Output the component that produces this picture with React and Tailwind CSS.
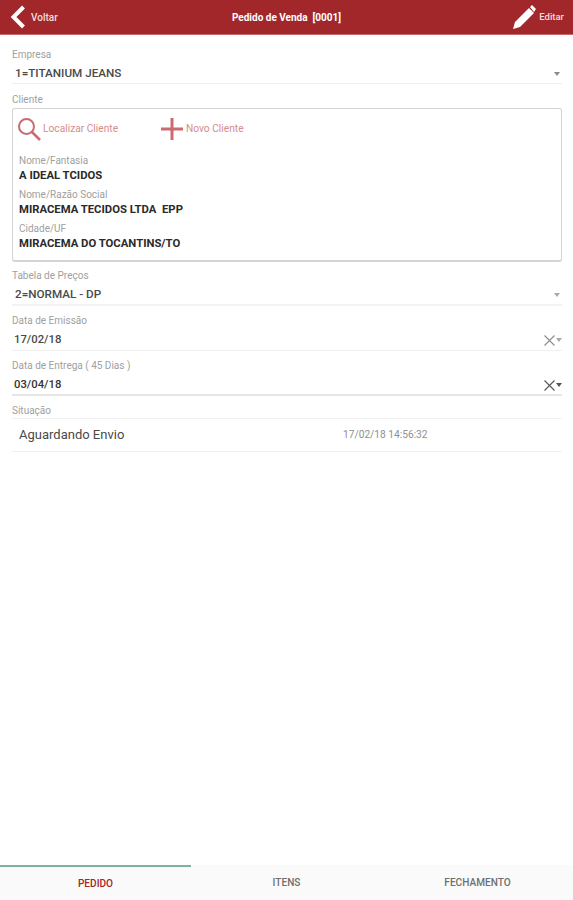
import React from 'react';

const Caret = ({ className = 'text-[#8a8a8a]' }) => (
    <svg width="6" height="4" viewBox="0 0 6 4" className={className}>
        <path d="M0 0h6L3 4z" fill="currentColor" />
    </svg>
);

const Clear = ({ className = 'text-[#8c8c8c]' }) => (
    <svg width="11" height="11" viewBox="0 0 11 11" className={className}>
        <path d="M.5.500l10 10M10.500.500l-10 10" stroke="currentColor" strokeWidth="1.100" fill="none" />
    </svg>
);

const Label = ({ children, className = '' }) => (
    <div className={`text-[10px] leading-[12px] text-[#a0a0a0] ${className}`}>{children}</div>
);

const ClientField = ({ label, value }) => (
    <div>
        <Label>{label}</Label>
        <div className="mt-px text-[11.3px] leading-[15px] font-bold text-[#2a2a2a] whitespace-pre">{value}</div>
    </div>
);

const App = () => {
    return (
        <div className="flex flex-col h-[900px] w-[573px] bg-white font-['Roboto',sans-serif]">
            {/* header */}
            <header className="flex items-center justify-between h-[35px] bg-[#a1272b] border-b border-[#c46a6d] text-white shrink-0">
                <div className="flex items-center pl-[10px] w-[120px]">
                    <svg width="16" height="24" viewBox="0 0 16 24">
                        <path d="M13.500 2L3.500 12l10 10" stroke="white" strokeWidth="4" fill="none" />
                    </svg>
                    <span className="ml-[5px] text-[10px] font-medium text-[#f3dede]">Voltar</span>
                </div>
                <div className="text-[10px] font-bold whitespace-pre">Pedido de Venda  [0001]</div>
                <div className="flex items-center justify-end pr-[9px] w-[120px]">
                    <svg width="25" height="26" viewBox="0 0 25 26">
                        <path d="M1 25l2-7L17 4l5 5L8 23z" fill="white" />
                        <path d="M18 3l2-2 4 4-2 3z" fill="white" />
                    </svg>
                    <span className="ml-[2px] text-[9.5px] font-medium text-[#f3dede]">Editar</span>
                </div>
            </header>

            {/* form */}
            <main className="flex-1 pl-3 pr-[11px] pt-[14px]">
                <Label>Empresa</Label>
                <div className="flex items-center justify-between h-[22px] pt-[3px] pl-[3px] pr-[2px] border-b border-[#efefef] mt-px">
                    <span className="text-[11.7px] font-medium text-[#4a4a4a]">1=TITANIUM JEANS</span>
                    <Caret />
                </div>

                <Label className="mt-[10px]">Cliente</Label>
                <section className="mt-[2px] h-[154px] border border-[#d4d4d4] rounded-[3px] border-b-2 pl-[6px] pt-[7px]">
                    <div className="flex items-center h-[26px] -ml-[2px]">
                        <div className="flex items-center w-[143px]">
                            <svg width="24" height="24" viewBox="0 0 24 24" className="text-[#cb6b6f]">
                                <circle cx="9.500" cy="9.500" r="7.500" stroke="currentColor" strokeWidth="2" fill="none" />
                                <path d="M15 15l8 8" stroke="currentColor" strokeWidth="2.500" />
                            </svg>
                            <span className="ml-[2px] text-[10.2px] text-[#d58b8e]">Localizar Cliente</span>
                        </div>
                        <div className="flex items-center">
                            <svg width="24" height="24" viewBox="0 0 24 24" className="text-[#cb6b6f]">
                                <path d="M12 1v22M1 12h22" stroke="currentColor" strokeWidth="3" />
                            </svg>
                            <span className="ml-[2px] text-[10.2px] text-[#d58b8e]">Novo Cliente</span>
                        </div>
                    </div>
                    <div className="flex flex-col gap-[6px] mt-[13px]">
                        <ClientField label="Nome/Fantasia" value="A IDEAL TCIDOS" />
                        <ClientField label="Nome/Razão Social" value="MIRACEMA TECIDOS LTDA  EPP" />
                        <ClientField label="Cidade/UF" value="MIRACEMA DO TOCANTINS/TO" />
                    </div>
                </section>

                <Label className="mt-[8px]">Tabela de Preços</Label>
                <div className="flex items-center justify-between h-[23px] pt-[3px] pl-[3px] pr-[2px] border-b-2 border-[#f3f3f3] mt-px">
                    <span className="text-[11.7px] font-medium text-[#4a4a4a]">2=NORMAL - DP</span>
                    <Caret className="text-[#a8a8a8]" />
                </div>

                <Label className="mt-[9px]">Data de Emissão</Label>
                <div className="flex items-center justify-between h-[23px] pt-[2px] pl-[2px] border-b border-[#efefef] mt-px">
                    <span className="text-[11.3px] font-medium text-[#4a4a4a]">17/02/18</span>
                    <div className="flex items-center gap-px">
                        <Clear />
                        <Caret className="text-[#a8a8a8]" />
                    </div>
                </div>

                <Label className="mt-[9px]">Data de Entrega ( 45 Dias )</Label>
                <div className="flex items-center justify-between h-[23px] pt-[3px] pl-[2px] border-b-2 border-[#e6e6e6] mt-px">
                    <span className="text-[11.3px] font-medium text-[#333]">03/04/18</span>
                    <div className="flex items-center gap-px">
                        <Clear className="text-[#555]" />
                        <Caret className="text-[#555]" />
                    </div>
                </div>

                <Label className="mt-[9px]">Situação</Label>
                <div className="flex items-center h-[34px] pl-[7px] border-y border-[#f1f1f1] mt-px">
                    <span className="w-[324px] text-[13px] text-[#4a4a4a]">Aguardando Envio</span>
                    <span className="text-[10.2px] text-[#8f8f8f]">17/02/18 14:56:32</span>
                </div>
            </main>

            {/* tabs */}
            <nav className="flex h-[35px] bg-[#fafafa] shrink-0 text-[10.1px] font-medium text-[#6f6f6f]">
                <div className="flex items-center justify-center w-[191px] border-t-2 border-[#7fb0a6] text-[#a1272b]">PEDIDO</div>
                <div className="flex items-center justify-center w-[191px]">ITENS</div>
                <div className="flex items-center justify-center w-[191px]">FECHAMENTO</div>
            </nav>
        </div>
    );
};

export default App;
